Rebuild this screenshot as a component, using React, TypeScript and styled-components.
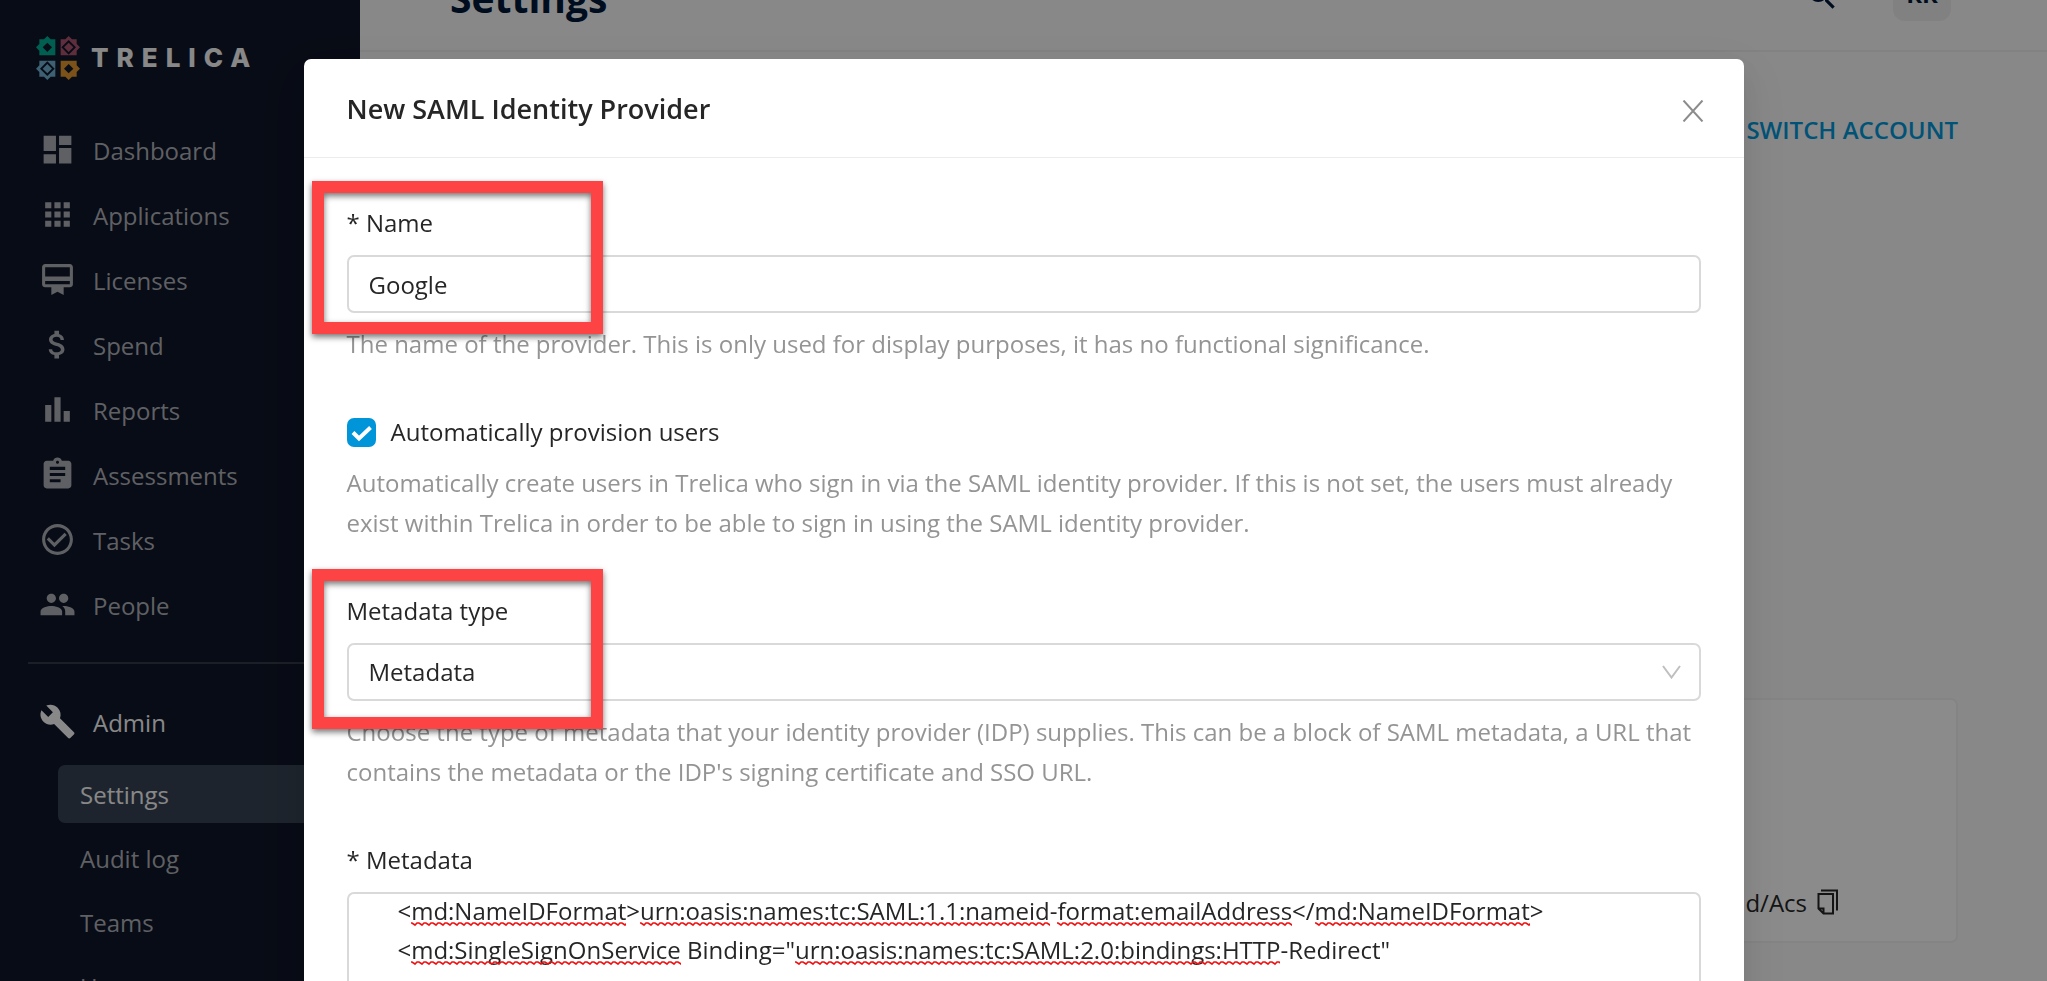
import React, { useEffect, useRef, useState } from 'react';
import styled, { createGlobalStyle } from 'styled-components';
import {
  MdApps, MdAssignment, MdAttachMoney, MdBarChart, MdBuild, MdCardMembership,
  MdCheckCircleOutline, MdDashboard, MdPeople, MdSearch,
} from 'react-icons/md';
import type { IconType } from 'react-icons';

const GlobalStyle = createGlobalStyle`
  *, *::before, *::after { box-sizing: border-box; }
  body {
    margin: 0;
    overflow: hidden;
    font-family: 'Open Sans', 'Noto Sans', sans-serif;
    font-size: 24px;
    line-height: 40px;
    color: #262626;
  }
  button, input, select, textarea { font: inherit; color: inherit; margin: 0; }
  ul { list-style: none; margin: 0; padding: 0; }
`;

const Shell = styled.div`
  display: flex;
  height: 100vh;
  overflow: hidden;
  background: #f8f8f8;
`;

const Sidebar = styled.aside`
  flex: 0 0 360px;
  padding: 36px 0 0 28px;
  background: #0f1628;
  overflow: hidden;
`;

const Brand = styled.a`
  display: flex;
  align-items: center;
  gap: 11px;
  height: 43px;
  padding-left: 8px;
  margin-bottom: 39px;
  text-decoration: none;
  color: #f8f8f8;
`;

const Wordmark = styled.span`
  font-family: Inter, sans-serif;
  font-weight: 800;
  font-size: 26px;
  letter-spacing: 8px;
`;

const NavLink = styled.a<{ $strong?: boolean }>`
  display: flex;
  align-items: center;
  gap: 17px;
  height: 65px;
  padding-left: 11px;
  text-decoration: none;
  color: ${(p) => (p.$strong ? '#f8f8f8' : '#aeb0b6')};
  svg { width: 37px; height: 37px; margin-bottom: 2px; }
`;

const Divider = styled.hr`
  margin: 24px 0 26px;
  border: 0;
  border-top: 2px solid #343945;
`;

const SubNav = styled.ul`
  display: flex;
  flex-direction: column;
  gap: 6px;
  padding: 10px 16px 0 30px;
`;

const SubLink = styled.a<{ $active?: boolean }>`
  display: flex;
  align-items: center;
  height: 58px;
  padding: 2px 22px 0;
  border-radius: 7px;
  text-decoration: none;
  color: ${(p) => (p.$active ? '#f8f8f8' : '#aeb0b6')};
  background: ${(p) => (p.$active ? '#364252' : 'transparent')};
`;

const Main = styled.main`
  flex: 1;
  min-width: 0;
`;

const TopBar = styled.header`
  display: flex;
  align-items: flex-end;
  height: 52px;
  padding: 0 96px 0 90px;
  border-bottom: 2px solid #ededed;
  overflow: hidden;
`;

const PageTitle = styled.h1`
  flex: 1;
  margin: 0 0 32px;
  font-size: 39px;
  line-height: 40px;
  font-weight: 700;
  color: #00193a;
`;

const IconButton = styled.button`
  display: flex;
  margin: 0 53px 36px 0;
  padding: 0;
  border: 0;
  background: none;
  color: #00193a;
  svg { width: 36px; height: 36px; }
`;

const Avatar = styled.button`
  display: flex;
  align-items: center;
  justify-content: center;
  width: 58px;
  height: 58px;
  margin-bottom: 29px;
  padding: 4px 0 0;
  border: 0;
  border-radius: 12px;
  background: #ebebeb;
  color: #00193a;
  font-weight: 700;
`;

const PageBody = styled.div`
  display: flex;
  flex-direction: column;
  align-items: flex-end;
  padding: 58px 89px 0 90px;
`;

const SwitchLink = styled.a`
  color: #0097d8;
  font-weight: 600;
  text-decoration: none;
`;

const Card = styled.section`
  display: flex;
  align-items: flex-end;
  justify-content: flex-end;
  gap: 10px;
  width: 100%;
  height: 245px;
  margin-top: 548px;
  padding: 0 117px 18px 0;
  border: 2px solid #f0f0f0;
  border-radius: 7px;
  background: #fdfdfd;
`;

const CopyButton = styled.button`
  display: flex;
  align-items: center;
  height: 42px;
  padding: 0;
  border: 0;
  background: none;
`;

const Mask = styled.div`
  position: fixed;
  inset: 0;
  padding: 59px 24px 0;
  overflow: hidden;
  background: rgba(0, 0, 0, 0.45);
`;

const Dialog = styled.form`
  max-width: 1440px;
  margin: 0 auto;
  border-radius: 7px;
  background: #fff;
  box-shadow: 0 5px 11px -7px rgba(0, 0, 0, 0.12), 0 11px 29px rgba(0, 0, 0, 0.08),
    0 16px 50px 14px rgba(0, 0, 0, 0.05);
`;

const DialogHeader = styled.header`
  display: flex;
  align-items: center;
  justify-content: space-between;
  height: 99px;
  padding: 0 40px 0 43px;
  border-bottom: 1px solid #ececec;
`;

const DialogTitle = styled.h2`
  margin: 0;
  padding-top: 2px;
  font-size: 27px;
  font-weight: 600;
`;

const CloseButton = styled.button`
  display: flex;
  padding: 6px 0 0;
  border: 0;
  background: none;
  color: #8c8c8c;
`;

const DialogBody = styled.div`
  display: flex;
  flex-direction: column;
  gap: 48px;
  padding: 45px 43px;
`;

const Field = styled.div`
  position: relative;
  display: flex;
  flex-direction: column;
`;

const Label = styled.label`
  margin-bottom: 12px;
`;

const Help = styled.p`
  margin: 11px 0 0;
  color: #949494;
`;

const TextInput = styled.input`
  width: 100%;
  height: 58px;
  padding: 0 20px;
  border: 2px solid #d9d9d9;
  border-radius: 7px;
  background: #fff;
`;

const SelectBox = styled.div`
  display: grid;
  align-items: center;
  > * { grid-area: 1 / 1; }
  > svg { justify-self: end; margin-right: 20px; pointer-events: none; }
`;

const Select = styled.select`
  appearance: none;
  width: 100%;
  height: 58px;
  padding: 0 48px 0 20px;
  border: 2px solid #d9d9d9;
  border-radius: 7px;
  background: #fff;
`;

const CheckRow = styled.label`
  display: flex;
  align-items: center;
  gap: 15px;
`;

const CheckBox = styled.span`
  display: grid;
  > * { grid-area: 1 / 1; }
  svg { pointer-events: none; }
`;

const CheckInput = styled.input`
  appearance: none;
  width: 29px;
  height: 29px;
  border: 2px solid #d9d9d9;
  border-radius: 7px;
  &:checked { border-color: #0095d9; background: #0095d9; }
`;

const AreaBox = styled.div`
  position: relative;
  display: flex;
`;

const TextArea = styled.textarea`
  flex: 1;
  min-width: 0;
  padding: 0 24px;
  border: 2px solid #d9d9d9;
  border-radius: 7px;
  line-height: 39px;
  resize: none;
  overflow: hidden;
  background: #fff;
`;

const Squiggle = styled.i`
  position: absolute;
  height: 4px;
  pointer-events: none;
  background: url("data:image/svg+xml,%3Csvg xmlns='http://www.w3.org/2000/svg' width='7' height='4'%3E%3Cpath d='M-1 1L1 1L4 3L6 1L8 1' fill='none' stroke='%23f01010' stroke-width='1.7'/%3E%3C/svg%3E") repeat-x;
`;

const Callout = styled.div<{ $height: number }>`
  position: absolute;
  top: -22px;
  left: -35px;
  width: 291px;
  height: ${(p) => p.$height}px;
  border: 12px solid #fd4343;
  filter: drop-shadow(0 3px 3px rgba(0, 0, 0, 0.55));
  pointer-events: none;
`;

const solidStar = 'M17 0l5 5h7v24H5v-7l-5-5 5-5V5h7zM17 10l-7 7 7 7 7-7z';
const ringStar = 'M17 0l5 5h7v24H5v-7l-5-5 5-5V5h7zM17 6L6 17l11 11 11-11zM17 10l7 7-7 7-7-7z';

function TrelicaMark() {
  return (
    <svg width="44" height="44" viewBox="0 0 66 66" fillRule="evenodd" aria-hidden="true">
      <path fill="#00ad93" d={solidStar} />
      <path fill="#ad5470" d={ringStar} transform="translate(66 0) scale(-1 1)" />
      <path fill="#6fb0d0" d={ringStar} transform="translate(0 66) scale(1 -1)" />
      <path fill="#e0952f" d={solidStar} transform="translate(66 66) scale(-1 -1)" />
    </svg>
  );
}

const navItems: [string, IconType][] = [
  ['Dashboard', MdDashboard],
  ['Applications', MdApps],
  ['Licenses', MdCardMembership],
  ['Spend', MdAttachMoney],
  ['Reports', MdBarChart],
  ['Assessments', MdAssignment],
  ['Tasks', MdCheckCircleOutline],
  ['People', MdPeople],
];

const adminItems = ['Settings', 'Audit log', 'Teams', 'Users'];

const metadataText = [
  '    <md:NameIDFormat>urn:oasis:names:tc:SAML:1.1:nameid-format:emailAddress</md:NameIDFormat>',
  '    <md:SingleSignOnService Binding="urn:oasis:names:tc:SAML:2.0:bindings:HTTP-Redirect"',
  '', '', '', '',
].join('\n');

const misspelt = /md:\w+|urn:[\w:.]+|format:\w+/g;

type Mark = { left: number; top: number; width: number };

function SpellCheckedArea({ id }: { id: string }) {
  const ref = useRef<HTMLTextAreaElement>(null);
  const [text, setText] = useState(metadataText);
  const [marks, setMarks] = useState<Mark[]>([]);

  useEffect(() => {
    if (ref.current) ref.current.scrollTop = 3;
  }, []);

  useEffect(() => {
    const area = ref.current;
    const ctx = document.createElement('canvas').getContext('2d');
    if (!area || !ctx) return;
    const css = getComputedStyle(area);
    ctx.font = `${css.fontSize} ${css.fontFamily}`;
    const pad = parseFloat(css.paddingLeft) + parseFloat(css.borderLeftWidth);
    const line = parseFloat(css.lineHeight);
    setMarks(
      text.split('\n').flatMap((row, i) =>
        [...row.matchAll(misspelt)].map((m) => ({
          left: pad + ctx.measureText(row.slice(0, m.index)).width,
          top: (i + 1) * line - 6 - area.scrollTop,
          width: ctx.measureText(m[0]).width,
        })),
      ),
    );
  }, [text]);

  return (
    <AreaBox>
      <TextArea id={id} ref={ref} rows={5} spellCheck={false} value={text} onChange={(e) => setText(e.target.value)} />
      {marks.map((m, i) => (
        <Squiggle key={i} style={m} />
      ))}
    </AreaBox>
  );
}

export default function App() {
  return (
    <>
      <GlobalStyle />
      <Shell>
        <Sidebar>
          <Brand href="#">
            <TrelicaMark />
            <Wordmark>TRELICA</Wordmark>
          </Brand>
          <nav>
            <ul>
              {navItems.map(([name, Icon]) => (
                <li key={name}>
                  <NavLink href="#"><Icon />{name}</NavLink>
                </li>
              ))}
            </ul>
            <Divider />
            <NavLink href="#" $strong><MdBuild />Admin</NavLink>
            <SubNav>
              {adminItems.map((name) => (
                <li key={name}>
                  <SubLink href="#" $active={name === 'Settings'}>{name}</SubLink>
                </li>
              ))}
            </SubNav>
          </nav>
        </Sidebar>
        <Main>
          <TopBar>
            <PageTitle>Settings</PageTitle>
            <IconButton type="button" aria-label="Search"><MdSearch /></IconButton>
            <Avatar type="button">RR</Avatar>
          </TopBar>
          <PageBody>
            <SwitchLink href="#">SWITCH ACCOUNT</SwitchLink>
            <Card>
              <span>d/Acs</span>
              <CopyButton type="button" aria-label="Copy">
                <svg width="22" height="26" viewBox="0 0 22 26" fill="none" stroke="currentColor" strokeWidth="2">
                  <path d="M4 1.500h16v20M1.500 5h14.500v19.500H6.500l-5-5zM1.500 19.500h5v5" />
                </svg>
              </CopyButton>
            </Card>
          </PageBody>
        </Main>
      </Shell>
      <Mask>
        <Dialog role="dialog" aria-labelledby="dialog-title">
          <DialogHeader>
            <DialogTitle id="dialog-title">New SAML Identity Provider</DialogTitle>
            <CloseButton type="button" aria-label="Close">
              <svg width="22" height="22" viewBox="0 0 22 22" fill="none" stroke="currentColor" strokeWidth="2">
                <path d="M1.500 0.500l19 21M20.500 0.500l-19 21" />
              </svg>
            </CloseButton>
          </DialogHeader>
          <DialogBody>
            <Field>
              <Label htmlFor="name">* Name</Label>
              <TextInput id="name" defaultValue="Google" />
              <Help>The name of the provider. This is only used for display purposes, it has no functional significance.</Help>
              <Callout $height={153} />
            </Field>
            <Field>
              <CheckRow>
                <CheckBox>
                  <CheckInput type="checkbox" defaultChecked />
                  <svg width="29" height="29" viewBox="0 0 29 29" fill="none" stroke="#fff" strokeWidth="4">
                    <path d="M6 14.500l6 6L23.500 9.500" />
                  </svg>
                </CheckBox>
                Automatically provision users
              </CheckRow>
              <Help>
                Automatically create users in Trelica who sign in via the SAML identity provider. If this is not set, the users must already
                exist within Trelica in order to be able to sign in using the SAML identity provider.
              </Help>
            </Field>
            <Field>
              <Label htmlFor="type">Metadata type</Label>
              <SelectBox>
                <Select id="type" defaultValue="Metadata">
                  <option>Metadata</option>
                </Select>
                <svg width="19" height="14" viewBox="0 0 19 14" fill="none" stroke="#bfbfbf" strokeWidth="2">
                  <path d="M1 1l8.500 11.500L18 1" />
                </svg>
              </SelectBox>
              <Help>
                Choose the type of metadata that your identity provider (IDP) supplies. This can be a block of SAML metadata, a URL that
                contains the metadata or the IDP's signing certificate and SSO URL.
              </Help>
              <Callout $height={160} />
            </Field>
            <Field>
              <Label htmlFor="metadata">* Metadata</Label>
              <SpellCheckedArea id="metadata" />
            </Field>
          </DialogBody>
        </Dialog>
      </Mask>
    </>
  );
}
